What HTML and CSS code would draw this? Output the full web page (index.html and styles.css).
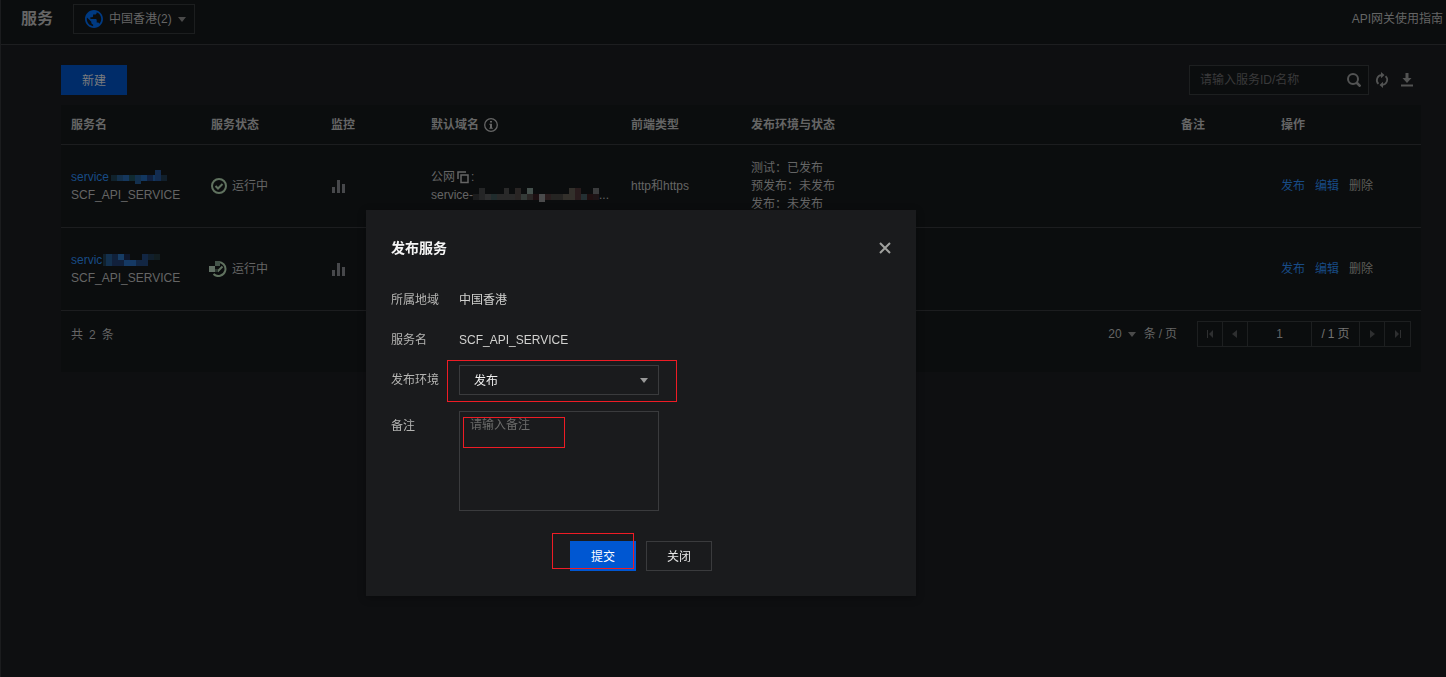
FILE: index.html
```html
<!DOCTYPE html>
<html lang="zh-CN">
<head>
<meta charset="utf-8">
<title>服务</title>
<link rel="stylesheet" href="styles.css">
</head>
<body>
<svg class="defs" aria-hidden="true">
  <symbol id="bars" viewBox="0 0 14 14"><path fill="currentColor" d="M1 8h3v6H1zM6 1h3v13H6zM11 5h3v9h-3z"/></symbol>
  <symbol id="caret" viewBox="0 0 8 5"><path fill="currentColor" d="M0 0h8L4 5z"/></symbol>
</svg>
<div class="page">
  <header class="topbar">
    <h1 class="topbar-title">服务</h1>
    <div class="region">
      <svg class="globe" viewBox="2 2 20 20" aria-hidden="true"><path fill="#003a82" d="M12 2C6.480 2 2 6.480 2 12s4.480 10 10 10 10-4.480 10-10S17.520 2 12 2zm-1 17.930c-3.950-.49-7-3.850-7-7.930 0-.62.08-1.210.21-1.790L9 15v1c0 1.100.9 2 2 2v1.930zm6.900-2.540c-.26-.81-1-1.390-1.900-1.390h-1v-3c0-.55-.45-1-1-1H8v-2h2c.55 0 1-.45 1-1V7h2c1.100 0 2-.9 2-2v-.41c2.930 1.190 5 4.060 5 7.410 0 2.080-.8 3.970-2.100 5.390z"/></svg>
      <select class="region-select" aria-label="地域"><option>中国香港(2)</option></select>
      <svg class="caret region-caret"><use href="#caret"/></svg>
    </div>
    <a class="guide" href="#">API网关使用指南</a>
  </header>

  <main class="content">
    <div class="toolbar">
      <button class="btn btn-new" type="button">新建</button>
      <div class="tools">
        <div class="search">
          <input class="search-input" type="text" placeholder="请输入服务ID/名称" aria-label="搜索服务">
          <button class="icon-btn" type="button" aria-label="搜索"><svg width="14" height="14" viewBox="0 0 14 14" fill="none" stroke="currentColor" stroke-width="2"><circle cx="6" cy="6" r="5"/><path d="M9.500 9.500l4 4" stroke-width="2.600"/></svg></button>
        </div>
        <button class="icon-btn" type="button" aria-label="刷新"><svg width="14" height="16" viewBox="0 0 14 16"><g fill="none" stroke="currentColor" stroke-width="1.800"><path d="M3.400 11.800A5 5 0 0 1 6.500 3.200"/><path d="M10.600 4.200A5 5 0 0 1 7.500 12.800"/></g><path fill="currentColor" d="M6 0l3.500 3.100L6 6.200zM8 9.800v6.200l-3.500-3.100z"/></svg></button>
        <button class="icon-btn" type="button" aria-label="下载"><svg width="12" height="14" viewBox="0 0 12 14" fill="currentColor"><path d="M4.500 0h3v5h3L6 10 1.500 5h3zM0 11.500h12v2H0z"/></svg></button>
      </div>
    </div>

    <section class="panel">
      <table class="grid">
        <colgroup><col class="w140"><col class="w120"><col class="w100"><col class="w200"><col class="w120"><col><col class="w100"><col class="w150"></colgroup>
        <thead>
          <tr>
            <th>服务名</th><th>服务状态</th><th>监控</th>
            <th><span class="inline-row">默认域名 <svg width="14" height="14" viewBox="0 0 14 14"><circle cx="7" cy="7" r="6.300" fill="none" stroke="currentColor" stroke-width="1.300"/><path fill="currentColor" d="M6 3h2v1.600H6zM5.300 5.800H8v4h.8v1H5.300v-1H6V6.800h-.7z"/></svg></span></th>
            <th>前端类型</th><th>发布环境与状态</th><th>备注</th><th>操作</th>
          </tr>
        </thead>
        <tbody>
          <tr>
            <td><a class="link inline-flush" href="#">service<svg class="mosaic" width="58" height="14" viewBox="0 0 58 14"><path fill="#10222c" d="M2 5h6v6H2z"/><path fill="#14304b" d="M8 5h6v6H8z"/><path fill="#15375d" d="M14 5h6v6h-6z"/><path fill="#102a31" d="M20 5h6v6h-6z"/><path fill="#13304e" d="M26 5h6v9h-6z"/><path fill="#123760" d="M32 5h6v6h-6z"/><path fill="#10203f" d="M38 5h6v6h-6z"/><path fill="#12365e" d="M44 5h6v6h-6z"/><path fill="#132c50" d="M46 0h6v11h-6z"/><path fill="#111f2b" d="M52 5h6v6h-6z"/></svg></a><div>SCF_API_SERVICE</div></td>
            <td><span class="status"><svg width="16" height="16" viewBox="0 0 16 16" fill="none" stroke="#60725f" stroke-width="2"><circle cx="8" cy="8" r="7"/><path d="M4.500 8l2.500 2.500L11.500 6"/></svg>运行中</span></td>
            <td><svg class="bars"><use href="#bars"/></svg></td>
            <td><div class="inline-flush">公网<svg class="copy" width="12" height="13" viewBox="0 0 12 13" fill="none" stroke="currentColor" stroke-width="1.500"><path d="M1 8V1h8"/><path d="M4 4h7v7.500H4z"/></svg>:</div>
              <div class="inline-flush">service-<svg class="mosaic" width="126" height="14" viewBox="0 0 126 14"><path fill="#1b1c1d" d="M0 6h6v6H0z"/><path fill="#242526" d="M6 0h6v12H6z"/><path fill="#2d2e2f" d="M12 6h12v6H12z"/><path fill="#202c2d" d="M18 6h6v6h-6z"/><path fill="#292929" d="M24 6h18v6H24zM31 0h5v6h-5z"/><path fill="#343b38" d="M48 6h6v6h-6z"/><path fill="#44504c" d="M54 0h6v6h-6z"/><path fill="#292524" d="M42 0h6v12h-6zM54 6h6v6h-6z"/><path fill="#1d1012" d="M60 6h6v6h-6z"/><path fill="#4a4b4c" d="M66 6h6v8h-6z"/><path fill="#291c1d" d="M72 6h6v6h-6zM102 0h6v12h-6z"/><path fill="#252422" d="M78 6h12v6H78z"/><path fill="#33302b" d="M90 6h6v6h-6zM96 0h6v12h-6z"/><path fill="#243033" d="M108 6h6v6h-6z"/><path fill="#201011" d="M114 6h6v6h-6z"/><path fill="#3a3b3c" d="M120 0h6v6h-6z"/><path fill="#1d1416" d="M120 6h6v6h-6z"/></svg>...</div></td>
            <td>http和https</td>
            <td>测试：已发布<br>预发布：未发布<br>发布：未发布</td>
            <td></td>
            <td><div class="actions"><a class="link" href="#">发布</a><a class="link" href="#">编辑</a><a class="muted" href="#">删除</a></div></td>
          </tr>
          <tr>
            <td><a class="link inline-flush" href="#">servic<svg class="mosaic" width="58" height="14" viewBox="0 0 58 14"><path fill="#10202c" d="M1 1h6v12H1z"/><path fill="#13304d" d="M4 1h6v12H4z"/><path fill="#10213a" d="M10 1h6v6h-6z"/><path fill="#163c64" d="M16 1h6v6h-6z"/><path fill="#11203b" d="M10 7h12v6H10z"/><path fill="#0e172c" d="M22 1h6v6h-6z"/><path fill="#153964" d="M22 7h12v6H22z"/><path fill="#122643" d="M34 7h12v6H34zM40 1h6v6h-6z"/><path fill="#111f2c" d="M46 1h6v6h-6z"/><path fill="#121d20" d="M52 1h6v6h-6z"/></svg></a><div>SCF_API_SERVICE</div></td>
            <td><span class="status"><svg class="status-cut" width="18" height="16" viewBox="0 0 18 16" fill="none" stroke="#60725f" stroke-width="2"><path d="M8 1.200A7 7 0 1 1 4.500 13M8.500 10.500L13.500 5.500"/><path fill="#44544a" stroke="none" d="M6 0h5v5H6z"/><path fill="#617064" stroke="none" d="M0 5h6v6H0z"/><path fill="#2a352e" stroke="none" d="M6 8h3v3H6z"/></svg>运行中</span></td>
            <td><svg class="bars"><use href="#bars"/></svg></td>
            <td></td>
            <td>http和https</td>
            <td>测试：已发布<br>预发布：未发布<br>发布：未发布</td>
            <td></td>
            <td><div class="actions"><a class="link" href="#">发布</a><a class="link" href="#">编辑</a><a class="muted" href="#">删除</a></div></td>
          </tr>
        </tbody>
      </table>
      <footer class="footer">
        <div class="total"><span>共</span><span>2</span><span>条</span></div>
        <div class="pager">
          <button class="page-size" type="button">20 <svg class="caret"><use href="#caret"/></svg></button>
          <div class="unit"><span>条</span><span>/</span><span>页</span></div>
          <div class="pages">
            <button class="page-btn" type="button" aria-label="首页"><svg width="8" height="8" viewBox="0 0 8 8" fill="currentColor"><path d="M1 0h1v8H1zM7 0v8L3 4z"/></svg></button>
            <button class="page-btn" type="button" aria-label="上一页"><svg width="8" height="8" viewBox="0 0 8 8" fill="currentColor"><path d="M6 0v8L1 4z"/></svg></button>
            <input class="page-input" type="text" value="1" aria-label="页码">
            <div class="page-total"><span>/</span><span>1</span><span>页</span></div>
            <button class="page-btn" type="button" aria-label="下一页"><svg width="8" height="8" viewBox="0 0 8 8" fill="currentColor"><path d="M2 0v8l5-4z"/></svg></button>
            <button class="page-btn" type="button" aria-label="末页"><svg width="8" height="8" viewBox="0 0 8 8" fill="currentColor"><path d="M6 0h1v8H6zM1 0v8l4-4z"/></svg></button>
          </div>
        </div>
      </footer>
    </section>
  </main>
</div>

<div class="overlay">
  <div class="modal" role="dialog" aria-modal="true" aria-labelledby="dialog-title">
    <div class="modal-head">
      <h2 class="modal-title" id="dialog-title">发布服务</h2>
      <button class="close" type="button" aria-label="关闭"><svg width="12" height="12" viewBox="0 0 12 12" stroke="currentColor" stroke-width="2"><path d="M1 1l10 10M11 1L1 11"/></svg></button>
    </div>
    <form class="form">
      <div class="field"><span class="label">所属地域</span><span class="value">中国香港</span></div>
      <div class="field"><span class="label">服务名</span><span class="value">SCF_API_SERVICE</span></div>
      <div class="field">
        <label class="label" for="env">发布环境</label>
        <div class="control">
          <select class="env" id="env"><option>发布</option></select>
          <svg class="caret env-caret"><use href="#caret"/></svg>
          <div class="mark mark-env"></div>
        </div>
      </div>
      <div class="field field-note">
        <label class="label" for="note">备注</label>
        <div class="control">
          <textarea class="note" id="note" placeholder="请输入备注"></textarea>
          <div class="mark mark-note"></div>
        </div>
      </div>
      <div class="buttons">
        <div class="control"><button class="btn btn-submit" type="button">提交</button><div class="mark mark-submit"></div></div>
        <button class="btn btn-close" type="button">关闭</button>
      </div>
    </form>
  </div>
</div>
</body>
</html>
```

FILE: styles.css
```css
* { box-sizing: border-box; }

body {
  margin: 0;
  background: #0e0f11;
  color: #656565;
  font: 12px/18px "Liberation Sans", "Noto Sans CJK SC", sans-serif;
}

button, input, select, textarea {
  font: inherit;
  color: inherit;
  background: none;
  border: 0;
  border-radius: 0;
  padding: 0;
  margin: 0;
  outline: 0;
}

select { appearance: none; }
a { color: inherit; text-decoration: none; }
svg { display: block; flex: none; }
h1, h2 { margin: 0; }

.defs { position: absolute; width: 0; height: 0; }

.page {
  min-height: 100vh;
  border-left: 1px solid #1b1c1e;
}

.topbar {
  display: flex;
  align-items: center;
  gap: 20px;
  height: 45px;
  padding: 0 3px 6px 20px;
  background: #0b0d0e;
  border-bottom: 1px solid #1d1e20;
}

.topbar-title { font-size: 16px; line-height: 24px; }

.region {
  position: relative;
  display: flex;
  align-items: center;
  gap: 6px;
  width: 122px;
  height: 30px;
  padding-left: 11px;
  border: 1px solid #1c1e1f;
}

.globe { width: 18px; height: 18px; }
.region-select { flex: 1; min-width: 0; height: 28px; }
.caret { width: 8px; height: 5px; color: #4a4a4a; }
.region-caret { position: absolute; right: 8px; top: 12px; pointer-events: none; }
.guide { margin-left: auto; }

.content { padding: 20px 25px 20px 60px; }

.toolbar {
  display: flex;
  justify-content: space-between;
  margin-bottom: 10px;
}

.btn { width: 66px; height: 30px; padding-top: 1px; }
.btn-new { background: #002c69; color: #7b7c7e; }

.tools {
  display: flex;
  align-items: center;
  gap: 12px;
  padding-right: 8px;
}

.search {
  display: flex;
  align-items: center;
  width: 180px;
  height: 30px;
  padding: 0 7px 0 10px;
  margin-right: -6px;
  background: #0b0d0e;
  border: 1px solid #1d1f20;
}

.search-input { flex: 1; min-width: 0; height: 28px; }
.search-input::placeholder { color: #3a3a3b; opacity: 1; }
.icon-btn { color: #525353; }

.panel { background: #0b0d0e; }

.grid {
  width: 100%;
  table-layout: fixed;
  border-spacing: 0;
}

.w100 { width: 100px; }
.w120 { width: 120px; }
.w140 { width: 140px; }
.w150 { width: 150px; }
.w200 { width: 200px; }

.grid th, .grid td {
  padding: 0 10px;
  text-align: left;
  border-bottom: 1px solid #1c1d1f;
}

.grid th { height: 40px; }
.grid td { height: 83px; }

.link { color: #184b85; }
.muted { color: #5e5d59; }

.inline-row { display: flex; align-items: center; gap: 5px; }
.inline-flush { display: flex; align-items: center; white-space: nowrap; }
.mosaic { shape-rendering: crispEdges; }
.copy { margin: 0 2px; }
.status { display: flex; align-items: center; gap: 5px; }
.status-cut { margin-left: -2px; }
.bars { width: 14px; height: 14px; color: #47484b; }
.actions { display: flex; gap: 10px; }

.footer {
  display: flex;
  align-items: flex-start;
  justify-content: space-between;
  padding: 10px 10px 23px;
}

.total { display: flex; gap: 6px; line-height: 28px; }
.pager { display: flex; align-items: center; }
.page-size { display: flex; align-items: center; gap: 6px; }
.unit { display: flex; gap: 3px; margin: 0 20px 0 8px; }

.pages {
  display: flex;
  height: 26px;
  border: 1px solid #1d1f20;
}

.pages > * { border-right: 1px solid #1d1f20; }
.pages > :last-child { border-right: 0; }
.page-btn { display: flex; align-items: center; justify-content: center; width: 25px; color: #2e2f30; }
.page-input { width: 64px; text-align: center; }
.page-total { display: flex; align-items: center; justify-content: center; gap: 3px; width: 48px; color: #747473; }

.overlay {
  position: fixed;
  inset: 0;
  display: flex;
  justify-content: center;
  align-items: flex-start;
  padding: 210px 164px 0 0;
}

.modal {
  width: 550px;
  padding: 25px;
  background: #1a1b1d;
  box-shadow: 0 2px 8px rgba(0, 0, 0, 0.3);
}

.modal-head {
  display: flex;
  align-items: center;
  justify-content: space-between;
  height: 26px;
  margin-bottom: 24px;
}

.modal-title { font-size: 14px; line-height: 26px; color: #f5f5f5; }
.close { color: #a0a19e; }

.form { display: flex; flex-direction: column; gap: 10px; }
.field { display: flex; line-height: 30px; }
.field-note { margin-top: 6px; }
.label { width: 68px; color: #b4b4b2; }
.value { color: #d2d2d0; }
.control { position: relative; }

.env {
  display: block;
  width: 200px;
  height: 30px;
  padding-left: 14px;
  border: 1px solid #3a3b3d;
  color: #f0f0f0;
}

.env-caret { position: absolute; right: 11px; top: 13px; color: #999; pointer-events: none; }

.note {
  display: block;
  width: 200px;
  height: 100px;
  padding: 4px 10px;
  border: 1px solid #3a3b3d;
  line-height: 18px;
  color: #d2d2d0;
  resize: none;
}

.note::placeholder { color: #6b6b6a; opacity: 1; }

.buttons {
  display: flex;
  justify-content: center;
  gap: 10px;
  margin-top: 20px;
}

.btn-submit { display: block; background: #0057d2; color: #fff; }
.btn-close { border: 1px solid #3a3b3d; color: #e8e8e8; }

.mark { position: absolute; border: 1px solid #ee1c25; pointer-events: none; }
.mark-env { inset: -5px -18px -7px -12px; }
.mark-note { left: 4px; top: 6px; width: 102px; height: 31px; }
.mark-submit { inset: -8px 2px 2px -18px; }
```
